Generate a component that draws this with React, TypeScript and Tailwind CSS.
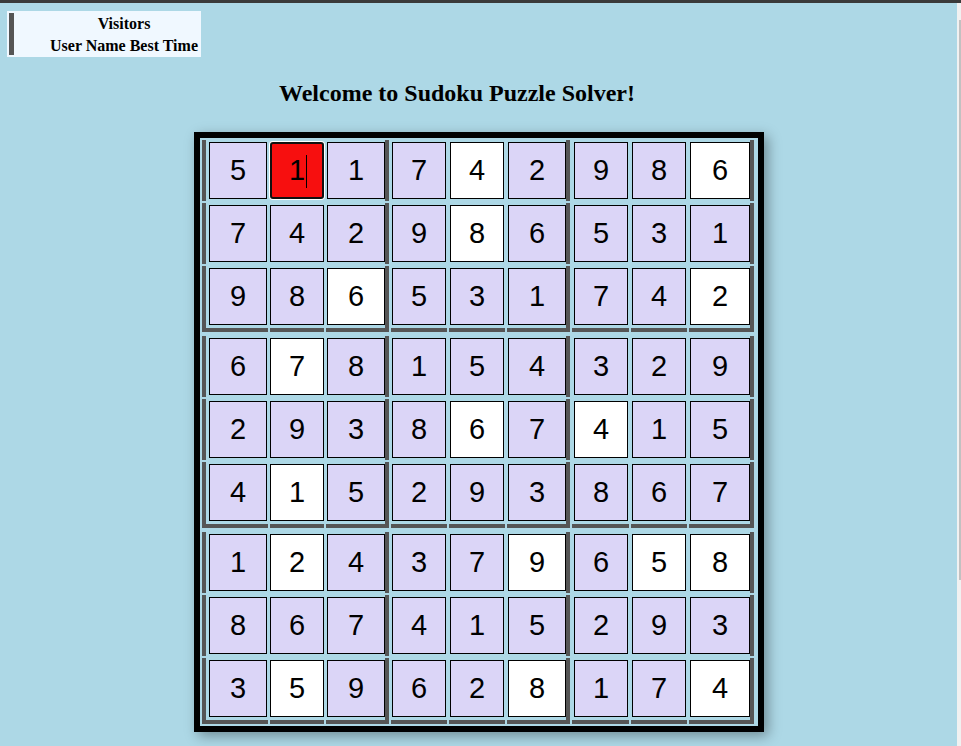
import React from 'react';

const grid = [
  '511742986',
  '742986531',
  '986531742',
  '678154329',
  '293867415',
  '415293867',
  '124379658',
  '867415293',
  '359628174',
];

// cells that are drawn white (given values)
const given = new Set([
  '0-4', '0-8', '1-4', '2-2', '2-8', '3-1', '4-4', '4-6', '5-1',
  '6-1', '6-5', '6-7', '6-8', '8-1', '8-5', '8-8',
]);

const cols = [
  { td: 'border-l-4 pl-[3px] pr-px', w: 'w-[58px]' },
  { td: '', w: 'w-[54px]' },
  { td: 'border-r-4 pl-px', w: 'w-[58px]' },
  { td: 'pl-px pr-px', w: 'w-[54px]' },
  { td: 'pl-px pr-px', w: 'w-[54px]' },
  { td: 'border-r-4 pl-px', w: 'w-[58px]' },
  { td: 'pl-[2px] pr-px', w: 'w-[54px]' },
  { td: 'pl-px pr-px', w: 'w-[54px]' },
  { td: 'border-r-4 pl-px', w: 'w-[60px]' },
];

function Cell({ r, c }: { r: number; c: number }) {
  const value = grid[r][c];
  const focused = r === 0 && c === 1;
  const isGiven = given.has(`${r}-${c}`);

  if (focused) {
    return (
      <div className={`${cols[c].w} h-[57px] relative flex items-center justify-center bg-[#f70f0f] border-2 border-[#101010] rounded-[3px] ring-1 ring-white text-[29px] text-black`}>
        {value}
        <span className="absolute left-[34px] top-[11px] w-px h-[33px] bg-black" />
      </div>
    );
  }

  return (
    <div
      className={`${cols[c].w} h-[57px] flex items-center justify-center border border-black text-[29px] text-black ${
        isGiven ? 'bg-white' : 'bg-[#dbd5f7]'
      }`}
    >
      {value}
    </div>
  );
}

function Row({ r }: { r: number }) {
  const lastInBlock = r % 3 === 2;
  return (
    <div className="flex gap-[2px]">
      {cols.map((col, c) => (
        <div
          key={c}
          className={`border-[#555] ${col.td} ${lastInBlock ? 'pt-[2px] pb-[3px] border-b-4' : 'pt-[2px] pb-[2px]'}`}
        >
          <Cell r={r} c={c} />
        </div>
      ))}
    </div>
  );
}

export default function App() {
  return (
    <div className="relative h-[746px] overflow-hidden bg-[#add8e6]" style={{ fontFamily: '"Liberation Serif", serif' }}>
      <div className="h-[3px] bg-[#3a3a3a]" />

      {/* Visitors table */}
      <div className="mt-[8px] ml-[7px] flex w-[194px] h-[46px] p-[2px] bg-[#f0f8ff]">
        <div className="w-[5px] bg-[#555]" />
        <div className="ml-auto pr-px flex flex-col items-center text-[16px] leading-[22px] font-bold text-black">
          <div>Visitors</div>
          <div>User Name Best Time</div>
        </div>
      </div>

      <h2 className="mt-[22px] ml-[279px] text-[24px] leading-[28px] font-bold text-black">
        Welcome to Sudoku Puzzle Solver!
      </h2>

      {/* Board */}
      <div
        className="mt-[25px] ml-[194px] w-fit border-[6px] border-black bg-[#add8e6] pt-[2px] pb-[2px] pl-[2px] pr-[4px] flex flex-col gap-[4px] shadow-[4px_4px_12px_rgba(0,0,0,0.35)]"
        style={{ fontFamily: '"Liberation Sans", Arial, sans-serif' }}
      >
        {[0, 1, 2].map((b) => (
          <div key={b} className="flex flex-col gap-[2px]">
            {[0, 1, 2].map((i) => (
              <Row key={i} r={b * 3 + i} />
            ))}
          </div>
        ))}
      </div>

      {/* scrollbar edge */}
      <div className="absolute right-0 top-[3px] bottom-0 w-[4px] bg-[#f1f1f1]">
        <div className="ml-[2px] mt-[17px] w-[2px] h-[560px] bg-[#c1c1c1]" />
      </div>
    </div>
  );
}
